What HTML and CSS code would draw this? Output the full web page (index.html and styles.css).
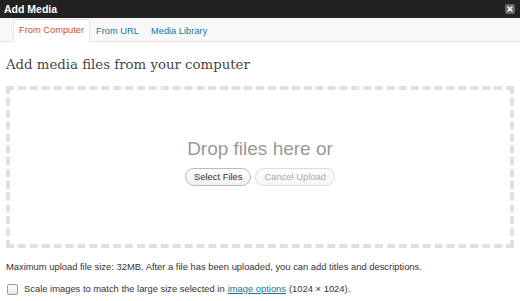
FILE: index.html
```html
<!DOCTYPE html>
<html>
<head>
<meta charset="utf-8">
<link rel="stylesheet" href="styles.css">
</head>
<body>
<div class="dialog">
  <div class="titlebar">
    <span class="title">Add Media</span>
    <span class="close" aria-label="Close">
      <svg width="10" height="10" viewBox="0 0 10 10"><path d="M3 3 L7 7 M7 3 L3 7" stroke="#fff" stroke-width="1.6" stroke-linecap="round"/></svg>
    </span>
  </div>
  <div class="tabs">
    <a class="tab active">From Computer</a>
    <a class="tab">From URL</a>
    <a class="tab">Media Library</a>
  </div>
  <div class="content">
    <h2 class="heading">Add media files from your computer</h2>
    <div class="dropzone">
      <p class="drop-text">Drop files here or</p>
      <div class="buttons">
        <button class="btn">Select Files</button>
        <button class="btn disabled">Cancel Upload</button>
      </div>
    </div>
    <p class="info">Maximum upload file size: 32MB. After a file has been uploaded, you can add titles and descriptions.</p>
    <label class="scale"><span class="checkbox"></span>Scale images to match the large size selected in <a class="link">image options</a> (1024 × 1024).</label>
  </div>
</div>
</body>
</html>
```
FILE: styles.css
```css
html, body {
  margin: 0;
  padding: 0;
  background: #fff;
}
body {
  width: 520px;
  height: 301px;
  overflow: hidden;
  font-family: "Liberation Sans", Arial, sans-serif;
  color: #333;
}
.titlebar {
  height: 18px;
  background: #222;
  display: flex;
  align-items: center;
  justify-content: space-between;
  padding: 0 5px 0 4px;
}
.title {
  color: #fff;
  font-weight: bold;
  font-size: 10.5px;
}
.close {
  width: 10px;
  height: 10px;
  background: #666;
  border-radius: 2px;
  display: flex;
}
.tabs {
  height: 23px;
  background: #f8f8f8;
  border-bottom: 1px solid #e6e6e6;
  display: flex;
  align-items: flex-end;
  padding-left: 13px;
}
.tab {
  font-size: 9.3px;
  color: #21759b;
  height: 21px;
  line-height: 21px;
  padding: 0 5px;
  border: 1px solid transparent;
  border-bottom: none;
  margin-bottom: -1px;
}
.tab.active {
  background: #fff;
  color: #d54e21;
  border-color: #e6e6e6;
  height: 22px;
}
.content {
  padding: 0 6px;
}
.heading {
  font-family: "DejaVu Serif", Georgia, serif;
  font-weight: normal;
  font-size: 13.3px;
  color: #464646;
  margin: 13px 0 0;
  line-height: 20px;
}
.dropzone {
  margin-top: 11px;
  border: 4px dashed #e0e0e0;
  display: flex;
  flex-direction: column;
  align-items: center;
  padding-top: 48px;
  box-sizing: border-box;
  height: 162px;
}
.drop-text {
  margin: 0;
  font-size: 19px;
  color: #999;
  line-height: 22px;
}
.buttons {
  display: flex;
  gap: 4px;
  margin-top: 8px;
}
.btn {
  font-family: "Liberation Sans", Arial, sans-serif;
  font-size: 9.4px;
  color: #333;
  height: 18px;
  padding: 0 8px;
  border: 1px solid #bbb;
  border-radius: 9px;
  background: linear-gradient(#fefefe, #f0f0f0);
  line-height: 16px;
}
.btn.disabled {
  color: #aaa;
  border-color: #ddd;
  background: linear-gradient(#fdfdfd, #f6f6f6);
}
.info {
  font-size: 9.4px;
  margin: 13px 0 0;
  line-height: 12px;
}
.scale {
  display: flex;
  align-items: center;
  font-size: 9.4px;
  margin-top: 10px;
  margin-left: 1px;
  line-height: 12px;
}
.checkbox {
  width: 9px;
  height: 9px;
  border: 1px solid #999;
  border-radius: 2px;
  background: linear-gradient(#fff, #e8e8e8);
  margin-right: 6px;
}
.link {
  color: #21759b;
  text-decoration: underline;
  margin: 0 3px;
}
```
